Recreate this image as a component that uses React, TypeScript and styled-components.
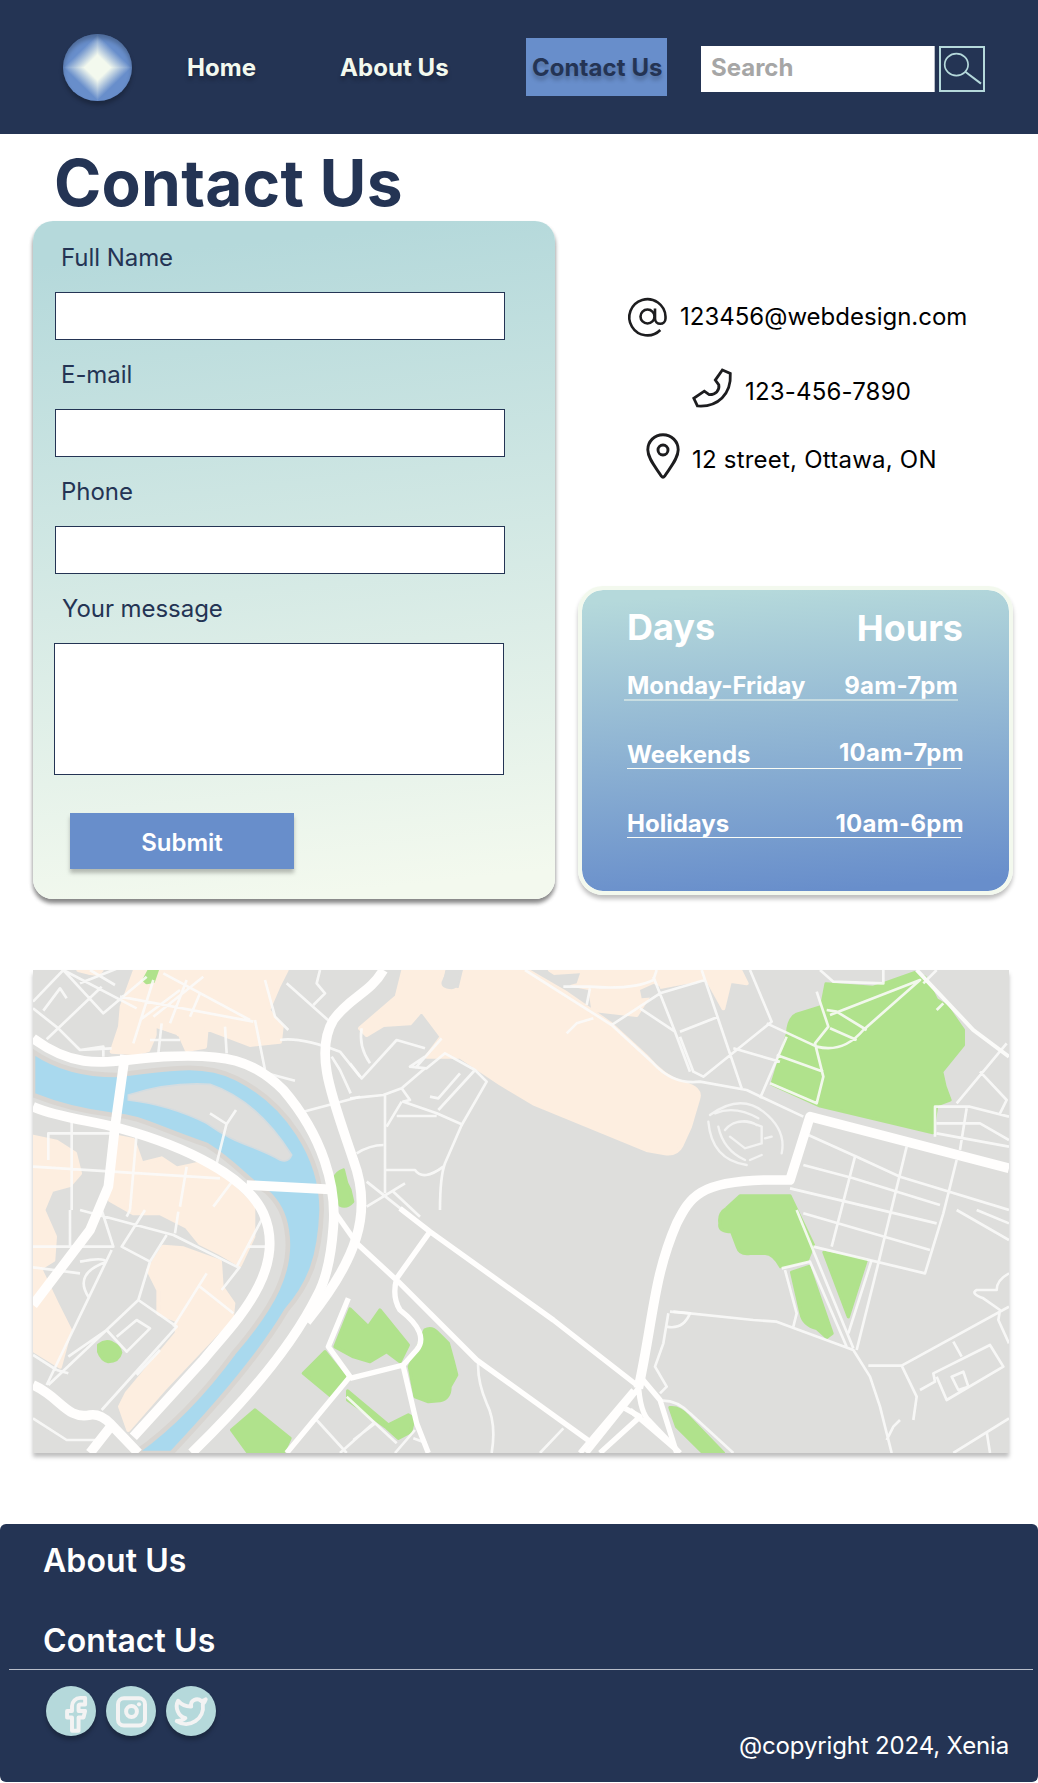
import React from "react";
import styled, { createGlobalStyle } from "styled-components";

const navy = "#243454";
const blue = "#688ecb";
const aqua = "#b5d9db";
const cream = "#f3f9ee";

const GlobalStyle = createGlobalStyle`
  *, *::before, *::after { box-sizing: border-box; }
  body {
    margin: 0;
    background: #fff;
    font-family: Inter, "Liberation Sans", sans-serif;
    font-size: 24px;
    line-height: 29px;
    color: ${navy};
  }
  input, textarea, button { font: inherit; border-radius: 0; outline: none; }
  h1, p { margin: 0; }
  a { color: inherit; text-decoration: none; }
`;

const Page = styled.div`
  width: 1038px;
  height: 1783px;
  display: flex;
  flex-direction: column;
  overflow: hidden;
`;

const Header = styled.header`
  height: 134px;
  flex: none;
  background: ${navy};
  display: flex;
  align-items: center;
  padding-left: 63px;
`;

const Logo = styled.div`
  width: 69px;
  height: 67px;
  border-radius: 50%;
  background:
    linear-gradient(to bottom right, ${cream} 20%, ${blue} 50%) bottom right / 35px 34px no-repeat,
    linear-gradient(to bottom left, ${cream} 20%, ${blue} 50%) bottom left / 35px 34px no-repeat,
    linear-gradient(to top left, ${cream} 20%, ${blue} 50%) top left / 35px 34px no-repeat,
    linear-gradient(to top right, ${cream} 20%, ${blue} 50%) top right / 35px 34px no-repeat;
  box-shadow: 0 4px 4px rgba(0, 0, 0, 0.25), inset 0 4px 4px rgba(0, 0, 0, 0.25);
`;

const Nav = styled.nav`
  display: flex;
  align-items: center;
  margin-left: 55px;
  width: 480px;
`;

const NavLink = styled.a<{ $width: number; $active?: boolean }>`
  width: ${(p) => p.$width}px;
  height: 58px;
  padding-left: ${(p) => (p.$active ? 6 : 0)}px;
  display: flex;
  align-items: center;
  white-space: nowrap;
  font-weight: 700;
  letter-spacing: 0.07px;
  color: ${(p) => (p.$active ? navy : cream)};
  background: ${(p) => (p.$active ? blue : "transparent")};
  text-shadow: 0 4px 4px rgba(0, 0, 0, 0.25);
`;

const SearchForm = styled.form`
  display: flex;
  gap: 4px;
  margin: 4px 0 0 34px;
`;

const SearchInput = styled.input`
  width: 234px;
  height: 46px;
  border: 0;
  border-right: 1px solid #b9bec8;
  padding: 0 10px 3px;
  background: #fff;
  font-weight: 700;
  &::placeholder { color: #a6a6a6; opacity: 1; }
`;

const SearchButton = styled.button`
  width: 46px;
  height: 46px;
  padding: 0;
  border: 2px solid ${aqua};
  background: transparent;
  svg { display: block; }
`;

const Title = styled.h1`
  margin: 10px 0 0 54px;
  font-size: 64px;
  line-height: 77px;
  font-weight: 700;
  letter-spacing: 0.25px;
`;

const Columns = styled.main`
  display: flex;
  align-items: flex-start;
  padding-left: 33px;
`;

const FormCard = styled.form`
  width: 522px;
  height: 678px;
  padding: 22px;
  flex: none;
  border-radius: 20px;
  background: linear-gradient(174deg, ${aqua} 6%, ${cream} 96%);
  box-shadow: 0 4px 4px rgba(0, 0, 0, 0.25), 0 4px 4px rgba(0, 0, 0, 0.3);
  display: flex;
  flex-direction: column;
`;

const Label = styled.label<{ $indent?: number }>`
  height: 29px;
  margin-left: ${(p) => p.$indent ?? 6}px;
  letter-spacing: -0.05px;
`;

const Field = styled.input`
  width: 450px;
  height: 48px;
  margin: 20px 0;
  border: 1px solid ${navy};
  background: #fff;
`;

const Message = styled.textarea`
  display: block;
  width: 450px;
  height: 132px;
  margin: 20px 0 38px -1px;
  border: 1px solid ${navy};
  background: #fff;
  resize: none;
`;

const Submit = styled.button`
  width: 224px;
  height: 56px;
  margin-left: 15px;
  padding: 3px 0 0;
  text-align: center;
  border: 0;
  background: ${blue};
  color: #fff;
  font-weight: 600;
  box-shadow: 0 4px 4px rgba(0, 0, 0, 0.25);
`;

const Side = styled.div`
  padding: 76px 0 0 23px;
`;

const ContactRow = styled.div<{ $left: number; $height: number; $gap: number; $drop?: number; $tracking?: number }>`
  display: flex;
  align-items: center;
  gap: ${(p) => p.$gap}px;
  height: ${(p) => p.$height}px;
  padding-left: ${(p) => p.$left}px;
  letter-spacing: ${(p) => p.$tracking ?? 0}px;
  color: #000;
  svg { flex: none; display: block; overflow: visible; }
  span { margin-top: ${(p) => p.$drop ?? 0}px; white-space: nowrap; }
  & + & { margin-top: 32px; }
  & + & + & { margin-top: 25px; }
`;

const HoursCard = styled.section`
  width: 435px;
  height: 309px;
  margin-top: 107px;
  border: 4px solid ${cream};
  border-radius: 25px;
  background: linear-gradient(176deg, ${aqua} 4%, ${blue} 96%) padding-box;
  box-shadow: 0 4px 4px rgba(0, 0, 0, 0.25);
  color: #fff;
  font-weight: 700;
  padding: 15px 0 0 42px;
`;

const HoursHead = styled.div`
  display: flex;
  justify-content: space-between;
  width: 340px;
  height: 45px;
  padding-left: 3px;
  margin-bottom: 21px;
  font-size: 36px;
  line-height: 44px;
  span:last-child { padding: 1px 1px 0 0; }
`;

const HoursRow = styled.div<{ $shift?: number; $line?: number; $end: number; $lift?: number; $after: number }>`
  display: flex;
  justify-content: space-between;
  width: 334px;
  height: ${(p) => 28 + (p.$line ?? 1)}px;
  margin: 0 0 ${(p) => p.$after}px ${(p) => p.$shift ?? 3}px;
  padding-left: ${(p) => 3 - (p.$shift ?? 3)}px;
  border-bottom: ${(p) => p.$line ?? 1}px solid ${(p) => (p.$line ? "rgba(243,249,238,.5)" : "#fbfdf6")};
  white-space: nowrap;
  span:last-child {
    letter-spacing: 0.3px;
    margin-right: ${(p) => p.$end}px;
    margin-top: ${(p) => -(p.$lift ?? 0)}px;
  }
`;

const MapFrame = styled.section`
  width: 976px;
  height: 483px;
  margin: 71px 0 0 33px;
  flex: none;
  box-shadow: 0 4px 4px rgba(0, 0, 0, 0.25);
  svg { display: block; }
`;

const Footer = styled.footer`
  height: 258px;
  margin-top: 71px;
  flex: none;
  border-radius: 6px;
  background: ${navy};
  color: #fff;
  display: flex;
  flex-direction: column;
`;

const FooterLink = styled.a<{ $top: number }>`
  margin: ${(p) => p.$top}px 0 0 43px;
  font-size: 32px;
  line-height: 39px;
  font-weight: 600;
  letter-spacing: 0.08px;
`;

const Rule = styled.div`
  width: 1024px;
  height: 1px;
  margin: 9px 0 16px 9px;
  background: #b8bdc9;
`;

const FooterBottom = styled.div`
  display: flex;
  justify-content: space-between;
  padding: 0 29px 0 46px;
`;

const Socials = styled.div`
  display: flex;
  gap: 10px;
`;

const SocialIcon = styled.a`
  width: 50px;
  height: 50px;
  border-radius: 50%;
  background: ${aqua};
  box-shadow: 0 4px 4px rgba(0, 0, 0, 0.25);
  svg { display: block; overflow: visible; }
`;

const Copyright = styled.p`
  margin-top: 45px;
  letter-spacing: -0.15px;
`;

const SocialSvg = ({ children }: { children: React.ReactNode }) => (
  <svg width="50" height="50" viewBox="0 0 50 50" fill="none" stroke="#f3f3f3" strokeWidth="4" strokeLinecap="round" strokeLinejoin="round">
    {children}
  </svg>
);

const CityMap = () => (
  <svg width="976" height="483" viewBox="39 30 2928 1449" preserveAspectRatio="none">
    <rect x="39" y="30" width="2928" height="1449" fill="#dededc" />

    {/* built-up areas */}
    <g fill="#fdeee0" stroke="#fdeee0" strokeWidth="12" strokeLinejoin="round">
      <path d="M345 30H800L775 80 745 150 785 200 780 245 690 255 560 205 555 260 500 270 480 225 415 200 385 270 350 280 275 275 300 200 305 140Z" />
      <path d="M175 30H245L235 42 205 38Z" />
      <path d="M39 530 110 545 165 580 180 640 150 675 95 690 70 750 105 830 100 900 60 925 110 1030 150 1110 120 1220 39 1170Z" />
      <path d="M290 530 340 540 365 610 425 595 470 625 540 610 610 650 700 740 700 830 660 915 600 880 540 850 500 800 420 760 340 760 270 720Z" />
      <path d="M430 860 490 865 600 905 605 980 640 1030 635 1080 590 1120 430 1290 325 1410 300 1340 320 1300 470 1120 470 1080 415 1060 415 990 385 930Z" />
      <path d="M1150 30H1270L1260 78 1320 92 1335 30H1520L1640 100 1770 190 1880 290Q1930 350 1990 370Q2045 385 2035 415L2010 500 1985 555Q1970 585 1935 580L1880 570 1710 500 1540 430 1440 370 1320 290 1220 290 1265 230 1205 150 1170 190 1090 195 1040 225 1020 205 1130 110Z" />
      <path d="M1590 30H2160L2180 70 2130 62 2110 145 2060 55 1900 85 1850 165 1720 150 1710 85 1660 75Z" />
    </g>
    <g fill="#dededc">
      <path d="M1860 90 1900 72Q1930 75 1920 110L1865 115Z" />
      <path d="M1280 30H1312Q1325 85 1295 88 1260 85 1265 65Z" />
      <path d="M1600 45 1680 40 1670 70 1640 78Z" />
      <path d="M410 205 470 225 475 265 410 275Z" />
    </g>

    {/* green areas */}
    <g fill="#b0e28c" stroke="#b0e28c" strokeWidth="10" strokeLinejoin="round">
      <path d="M388 30H412L400 64 380 68 372 60Z" />
      <path d="M940 660Q950 635 970 630L980 670 990 690 998 725Q980 745 960 735Z" />
      <path d="M236 1155Q255 1140 275 1148 300 1160 302 1178 295 1205 265 1205 245 1200 236 1175Z" />
      <path d="M635 1410 705 1350 810 1435 790 1479H685Z" />
      <path d="M850 1240 915 1175 975 1250 935 1310Z" />
      <path d="M990 1047 1045 1100 1080 1050 1165 1155 1140 1205 1100 1175 1050 1205 1000 1190 945 1160Z" />
      <path d="M983 1293 1105 1395 1165 1365 1182 1375 1172 1415 1135 1435 1100 1403 983 1320Z" />
      <path d="M1215 1110Q1235 1098 1255 1120L1285 1150 1300 1205 1310 1245 1290 1280Q1290 1315 1260 1322L1225 1325 1185 1310 1168 1220Z" />
      <path d="M1950 1343Q1980 1340 2005 1370L2110 1479H2050L1970 1400Z" />
      <path d="M2418 72 2560 82 2685 38 2715 52 2750 120 2780 138 2830 210 2830 255 2765 335 2775 380 2790 420 2750 435 2738 518 2400 438 2256 373 2303 220Q2305 175 2330 163L2405 140Z" />
      <path d="M2120 745 2160 708 2310 708 2380 855 2362 900 2282 920Q2260 880 2235 880L2190 880Q2160 885 2152 860L2135 815Q2095 815 2100 790 2095 760 2120 745Z" />
      <path d="M2315 937 2367 920 2436 1120 2420 1132 2390 1105Q2350 1095 2343 1060Z" />
      <path d="M2412 877 2538 902 2485 1070Z" />
    </g>

    {/* river with its island */}
    <path d="M39 275Q140 345 290 345C480 320 560 310 650 355C800 430 905 590 905 750C900 890 870 970 800 1050Q700 1220 455 1479H345Q500 1370 640 1180C760 1040 820 930 800 810Q790 740 740 695C690 670 650 610 560 555C400 500 360 470 280 465Q150 450 39 405Z" fill="#a9d9ee" stroke="#d8d5d1" strokeWidth="14" />
    <path d="M325 405Q450 365 570 373C680 410 755 490 815 585Q805 610 780 600C700 555 650 555 560 490Q450 435 325 420Z" fill="#dededc" stroke="#d4dce0" strokeWidth="5" />

    {/* side streets */}
    <g fill="none" stroke="#fbfbf9" strokeOpacity="0.88" strokeWidth="8" strokeLinejoin="round">
      <path d="M39 125 130 30 250 160 380 50M39 145 115 205 180 270 275 265M70 152 120 85 140 115M80 238 245 80M130 30 350 145M180 70 305 20M210 30 285 75M180 270 250 260V290M415 280 425 190M390 240H480M615 200 620 280M705 180 735 330M300 110 700 185M340 250 400 60M360 180 480 90M400 170 550 50M430 40 690 180M500 60 450 190M540 100 510 170M735 60 765 170 805 210M780 240Q840 230 960 275L1020 350M740 340 825 362M800 70 935 190M900 30 890 70 915 100 880 135M935 290 960 330 992 400M850 455 1020 410M570 460 620 492 648 450M620 490 590 610" />
      <path d="M85 600V520H275M155 470V750M39 620 600 655M350 520 330 750M500 620 480 740M640 660 580 740" />
      <path d="M39 860H280L245 750M39 922 180 940M180 905Q250 890 260 905M260 905Q160 940 205 1010M150 750V860M180 750 460 825 650 920 730 770M330 750 320 770M375 750 305 860 390 905M475 755 465 820M440 825 390 905 355 1020 85 1275M355 1020 470 1100 245 1350M275 870 80 1275M145 1190 260 1110 320 1175 390 1105 350 1080 290 1130M110 1230 145 1240M39 1185 110 1230M660 920 605 990M680 860H745M640 1060 540 980M460 1100 560 940M350 1245 420 1170" />
      <path d="M39 1375 140 1440H240M890 1380 980 1479M960 1479 1060 1390M980 1310 1130 1450M1125 1479 1185 1410M1180 1435 1220 1450M1065 1390 1000 1440" />
      <path d="M990 310 1025 355 1130 240 1215 265M1025 205Q1015 260 1050 310M1185 325 1265 235M1215 290 1170 320 1220 325 1275 280 1365 330 1400 365 1325 495 1275 610Q1260 650 1260 750M1365 330 1255 450M1320 340 1255 415 1230 410M990 415 1090 405 1145 385 1215 325M1145 385 1170 420 1150 425 1250 460 1330 495M1145 425 1100 500M1130 468H1250M1095 405V700M1010 580Q1050 555 1090 555M1095 630H1185Q1210 665 1270 620M1040 665 1160 760M1040 740 1155 670M1120 695 1200 770" />
      <path d="M1515 30 1775 195 1900 310Q1960 375 2040 365L2180 390 2350 470M1630 80H1710Q1840 90 1900 60L1910 30M1710 85 1700 135M1775 195 1920 100 2055 60M1860 145 1965 215 1900 50M1965 215 2010 335M1980 215 2095 170M2045 30 2165 385M1640 220 1670 190 1720 175M1980 230 2020 335 2050 350 2255 185 2190 30M2240 190 2390 260M2140 265 2280 305M2220 415 2300 230M2250 370 2390 430 2410 350 2385 250 2425 200 2390 95M2270 285 2410 335M2390 260Q2470 280 2530 210L2700 60 2430 165M2420 150 2450 155 2540 210M2430 205 2510 240M2400 30 2440 65 2590 70V30M2750 150 2770 130M2710 70 2750 30M2810 430 2960 250M2880 335 2960 420 2940 460M2745 530V440H2850L2967 470M2840 445 2820 570M2750 490H2880L2967 540M2750 520 2967 560" />
      <path d="M2365 525 2510 590 2640 650 2967 750M2350 615 2500 655 2760 735M2310 685 2500 730 2750 790M2505 590 2435 860M2660 560 2570 930 2510 1170M2810 600 2770 760 2715 940 2380 860M2350 760 2730 870M2810 750 2967 840M2870 750 2967 790" />
      <path d="M2330 750 2500 1165M2285 925 2370 905 2480 1160M2295 930 2330 1060 2320 1100M1960 1055 2200 1080 2270 1085 2500 1170 2550 1250 2580 1340 2615 1479M2545 1217H2645L2690 1310 2680 1380M2645 1217 2967 1040M2800 1145 2825 1190M2700 1290 2745 1265 2740 1240 2910 1155 2950 1220 2780 1320 2750 1250M2795 1250 2830 1235 2845 1280 2815 1290ZM2600 1440 2620 1400 2640 1380M2800 1479 2967 1375M2900 1415 2910 1479M2967 940Q2930 960 2930 990H2870Q2850 1000 2890 1015L2940 1050 2935 1080 2967 1150M2555 900 2485 1120" />
      <path d="M1375 1200Q1370 1260 1400 1330 1430 1390 1415 1479M1560 1479 1630 1405M1945 1060 1930 1150 1905 1220 1940 1280 1920 1300M1950 1055 2010 1060Q1990 1110 1940 1100M1925 1322Q1970 1320 2010 1360L2140 1479" />
    </g>
    <path d="M2690 30 2860 210 2967 290" fill="none" stroke="#fbfbf9" strokeWidth="12" />

    {/* stadium */}
    <g fill="none" stroke="#f3f3f2" strokeWidth="7" strokeLinecap="round">
      <path d="M2070 465Q2160 400 2230 455 2300 510 2285 580M2065 485Q2075 600 2180 615M2085 460Q2145 435 2215 475M2095 500Q2110 570 2175 600M2115 510Q2150 465 2225 500V550L2175 565 2130 530M2140 490Q2180 475 2210 495M2235 535 2255 530M2190 600 2225 585" />
    </g>

    {/* avenues */}
    <g fill="none" stroke="#fffefd" strokeWidth="16" strokeLinejoin="round">
      <path d="M1010 850 1135 965 1370 1200 1710 1445M1140 745 1230 815 1600 1080 1850 1275M1230 815 1130 955Q1115 1010 1140 1050 1230 1120 1190 1170L1150 1215 990 1255M1150 1220 1190 1390 1225 1479M985 1015 925 1160 990 1250" />
      <path d="M990 1250 800 1479M1865 1255 1920 1320 1970 1479M1840 1290 1680 1479M1815 1345 1860 1370 1740 1479" />
      <path d="M940 750 1010 850" />
    </g>

    {/* main roads */}
    <g fill="none" stroke="#fffefd" strokeWidth="29" strokeLinejoin="round">
      <path d="M39 235C180 340 270 300 430 290C620 280 700 300 790 390C910 530 950 680 940 800Q930 940 890 1010C830 1130 720 1280 515 1479" />
      <path d="M1090 30C1050 100 990 110 940 180C880 280 940 420 1000 600C1060 760 1010 900 860 1085" />
      <path d="M39 440C120 475 210 480 300 505C500 560 680 650 730 760C810 940 620 1110 550 1200L340 1430" />
      <path d="M315 285 285 500 265 680 210 810 39 1035" />
      <path d="M680 675 930 688" />
      <path d="M39 1275C120 1310 140 1380 210 1365Q240 1360 270 1390L355 1479M280 1390 210 1479" />
      <path d="M2967 625 2370 470 2310 660H2230C2040 665 2010 710 1970 790C1900 950 1900 1080 1855 1285" />
    </g>
    <path d="M1855 1270Q1860 1360 1890 1385L1980 1479M1855 1285 1700 1479M1830 1350 1980 1479" fill="none" stroke="#fffefd" strokeWidth="16" />
  </svg>
);

export default function App() {
  return (
    <>
      <GlobalStyle />
      <Page>
        <Header>
          <Logo />
          <Nav>
            <NavLink $width={153} href="#">Home</NavLink>
            <NavLink $width={186} href="#">About Us</NavLink>
            <NavLink $width={141} $active href="#">Contact Us</NavLink>
          </Nav>
          <SearchForm>
            <SearchInput placeholder="Search" />
            <SearchButton type="button" aria-label="Search">
              <svg width="42" height="42" viewBox="0 0 42 42" fill="none" stroke={aqua} strokeWidth="1.7">
                <ellipse cx="15.4" cy="16.6" rx="11.7" ry="11" />
                <path d="M24.3 23.8 40 35.6" strokeWidth="2" />
              </svg>
            </SearchButton>
          </SearchForm>
        </Header>

        <Title>Contact Us</Title>

        <Columns>
          <FormCard>
            <Label>Full Name</Label>
            <Field />
            <Label>E-mail</Label>
            <Field />
            <Label>Phone</Label>
            <Field />
            <Label $indent={7}>Your message</Label>
            <Message />
            <Submit type="button">Submit</Submit>
          </FormCard>

          <Side>
            <ContactRow $left={50} $height={39} $gap={13}>
              <svg width="39" height="39" viewBox="0 0 39 39" fill="none" stroke="#1d1d1f" strokeWidth="2.6">
                <circle cx="19.5" cy="19.5" r="7" />
                <path d="M27 11.5V21.5A5.2 5.2 0 0 0 37.5 21.5V19.5A18.1 18.1 0 1 0 32.3 33" />
              </svg>
              <span>123456@webdesign.com</span>
            </ContactRow>
            <ContactRow $left={114} $height={40} $gap={13} $drop={7} $tracking={0.18}>
              <svg width="40" height="40" viewBox="0 0 40 40" fill="none" stroke="#1d1d1f" strokeWidth="2.8">
                <path d="M30.4 2 38.3 5.4C39.5 26 26 39.5 5.4 37.9L1.8 30.3 12.3 23.2 17.2 26.6C23.5 26.8 27.8 22.5 26.8 16.8L23.3 12.1Z" />
              </svg>
              <span>123-456-7890</span>
            </ContactRow>
            <ContactRow $left={68} $height={46} $gap={12} $drop={7} $tracking={0.22}>
              <svg width="34" height="46" viewBox="0 0 34 46" fill="none" stroke="#1d1d1f" strokeWidth="2.9" strokeLinejoin="round">
                <path d="M17 1.8C8.4 1.8 1.8 8.4 1.8 16.8 1.8 25.5 9.5 34 15.4 43.2Q17 45.3 18.6 43.2C24.5 34 32.2 25.5 32.2 16.8 32.2 8.4 25.6 1.8 17 1.8Z" />
                <circle cx="17" cy="17" r="5" />
              </svg>
              <span>12 street, Ottawa, ON</span>
            </ContactRow>

            <HoursCard>
              <HoursHead>
                <span>Days</span>
                <span>Hours</span>
              </HoursHead>
              <HoursRow $shift={0} $line={2} $end={0} $after={39}>
                <span>Monday-Friday</span>
                <span>9am-7pm</span>
              </HoursRow>
              <HoursRow $end={-3} $lift={2} $after={40}>
                <span>Weekends</span>
                <span>10am-7pm</span>
              </HoursRow>
              <HoursRow $end={-3} $after={0}>
                <span>Holidays</span>
                <span>10am-6pm</span>
              </HoursRow>
            </HoursCard>
          </Side>
        </Columns>

        <MapFrame>
          <CityMap />
        </MapFrame>

        <Footer>
          <FooterLink $top={17} href="#">About Us</FooterLink>
          <FooterLink $top={41} href="#">Contact Us</FooterLink>
          <Rule />
          <FooterBottom>
            <Socials>
              <SocialIcon href="#" aria-label="Facebook">
                <SocialSvg>
                  <path transform="translate(9.6 8.6) scale(1.64)" strokeWidth="2.4" d="M18 2h-3a5 5 0 0 0-5 5v3H7v4h3v8h4v-8h3l1-4h-4V7a1 1 0 0 1 1-1h3z" />
                </SocialSvg>
              </SocialIcon>
              <SocialIcon href="#" aria-label="Instagram">
                <SocialSvg>
                  <rect x="12" y="12.2" width="27" height="27.3" rx="6" />
                  <circle cx="25.5" cy="25.5" r="5.4" />
                  <circle cx="33" cy="18.3" r="2.1" fill="#f3f3f3" stroke="none" />
                </SocialSvg>
              </SocialIcon>
              <SocialIcon href="#" aria-label="Twitter">
                <SocialSvg>
                  <path transform="translate(7.8 7.5) scale(1.45)" strokeWidth="2.7" d="M22 4s-.7 2.1-2 3.4c1.6 10-9.4 17.3-18 11.6 2.2.1 4.4-.6 6-2C3 15.5.5 9.6 3 5c2.2 2.6 5.6 4.1 9 4-.9-4.2 4-6.6 7-3.8 1.1 0 3-1.2 3-1.2z" />
                </SocialSvg>
              </SocialIcon>
            </Socials>
            <Copyright>@copyright 2024, Xenia</Copyright>
          </FooterBottom>
        </Footer>
      </Page>
    </>
  );
}
